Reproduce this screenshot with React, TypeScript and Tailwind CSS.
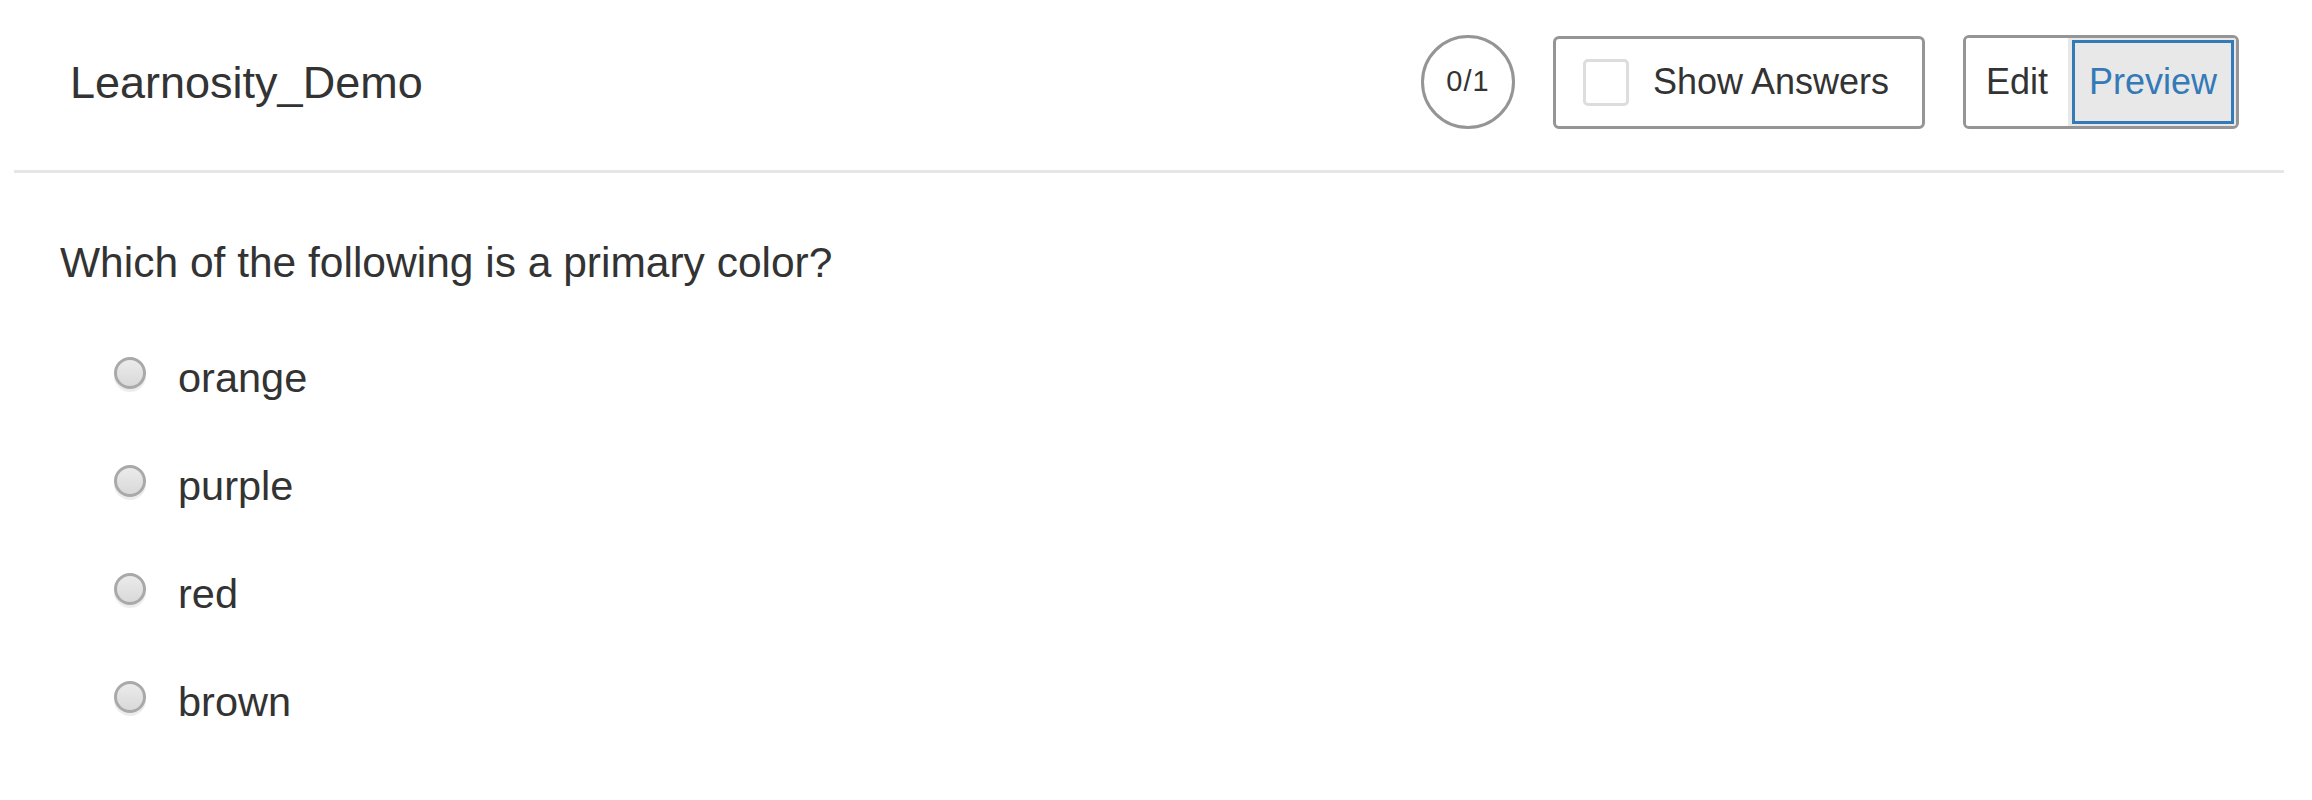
import React from 'react';

const OPTIONS = ['orange', 'purple', 'red', 'brown'];

// Runde Auswahl wie im Learnosity-Player
const Radio: React.FC = () => (
  <span className="mt-[3px] block h-[32px] w-[32px] shrink-0 rounded-full border-[3px] border-[#a9a9a9] bg-linear-to-b from-[#ebebeb] to-[#d9d9d9] shadow-[0_3px_1px_rgba(0,0,0,0.08)]" />
);

export default function App() {
  return (
    <div className="min-h-screen bg-white font-['Liberation_Sans',Arial,sans-serif] text-[#333]">
      <div className="ml-[14px] w-[2270px]">
        {/* Kopfzeile */}
        <header className="flex h-[170px] items-center justify-between pb-[6px] pl-[56px] pr-[45px]">
          <h1 className="text-[45px] font-normal leading-none">Learnosity_Demo</h1>

          <div className="flex items-center gap-[38px]">
            <div className="flex h-[94px] w-[94px] items-center justify-center rounded-full border-[3px] border-[#959595] text-[29px] tracking-[1px]">
              0/1
            </div>

            <label className="flex h-[93px] w-[372px] items-center rounded-[6px] border-[3px] border-[#959595] pl-[27px]">
              <span className="block h-[47px] w-[46px] rounded-[5px] border-[3px] border-[#ddd] bg-white" />
              <span className="ml-[24px] text-[36px] leading-none">Show Answers</span>
            </label>

            <div className="flex h-[94px] w-[276px] overflow-hidden rounded-[6px] border-[3px] border-[#959595]">
              <div className="flex w-[102px] items-center justify-center bg-white text-[36px] leading-none">Edit</div>
              <div className="flex flex-1 bg-[#e8e8e8] py-[2px] pl-[4px] pr-[2px]">
                <div className="flex flex-1 items-center justify-center border-[3px] border-[#337ab7] text-[36px] leading-none text-[#337ab7]">
                  Preview
                </div>
              </div>
            </div>
          </div>
        </header>

        <div className="h-[3px] bg-[#e6e6e6]" />

        {/* Frage */}
        <div className="pl-[46px] pt-[65px]">
          <p className="text-[42.5px] leading-[50px]">Which of the following is a primary color?</p>

          <ul className="mt-[66px] flex flex-col gap-[60px] pl-[54px]">
            {OPTIONS.map((opt) => (
              <li key={opt} className="flex items-start gap-[32px]">
                <Radio />
                <span className="text-[41.5px] leading-[48px]">{opt}</span>
              </li>
            ))}
          </ul>
        </div>
      </div>
    </div>
  );
}
